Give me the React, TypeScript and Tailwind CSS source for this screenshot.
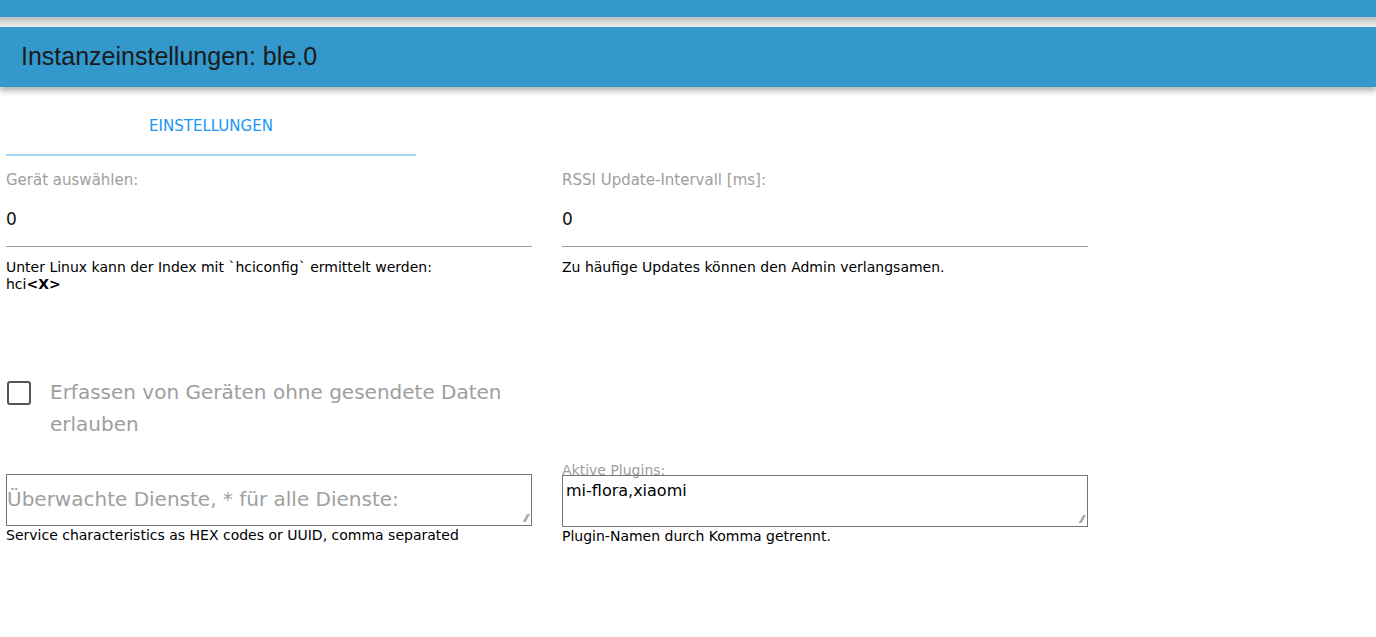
const App = () => {
  const font = { fontFamily: '"DejaVu Sans", "Open Sans", sans-serif' };
  return (
    <div className="min-h-screen bg-white" style={font}>
      <div className="h-[17px] bg-[#3399cc]" />
      <div className="h-[10px] bg-gradient-to-b from-[#bdbdbd] to-[#f5f5f5]" />
      <div className="h-[60px] bg-[#3399cc] flex items-center px-[21px] shadow-[0_4px_6px_rgba(0,0,0,0.3)]">
        <h1 className="text-[25px] text-[#1a1a1a]" style={{ fontFamily: '"Liberation Sans", Arial, sans-serif' }}>
          Instanzeinstellungen: ble.0
        </h1>
      </div>
      <div className="px-[6px]">
        <div className="w-[410px] h-[69px] flex items-center justify-center border-b-2 border-[#a6d6f5] text-[15px] text-[#2196f3] pt-3">
          EINSTELLUNGEN
        </div>
        <div className="grid grid-cols-[526px_526px] gap-x-[30px] mt-[14px]">
          <div>
            <div className="text-[15px] text-[#9e9e9e] leading-[20px]">Gerät auswählen:</div>
            <div className="h-[57px] border-b border-[#9e9e9e] flex items-center text-[17px] text-[#111] pt-1">0</div>
            <div className="text-[14px] text-black leading-[17px] mt-[12px]">
              Unter Linux kann der Index mit `hciconfig` ermittelt werden:<br />hci<b>&lt;X&gt;</b>
            </div>
          </div>
          <div>
            <div className="text-[15px] text-[#9e9e9e] leading-[20px]">RSSI Update-Intervall [ms]:</div>
            <div className="h-[57px] border-b border-[#9e9e9e] flex items-center text-[17px] text-[#111] pt-1">0</div>
            <div className="text-[14px] text-black leading-[17px] mt-[12px]">Zu häufige Updates können den Admin verlangsamen.</div>
          </div>
        </div>
        <div className="flex items-start gap-[19px] mt-[86px] ml-[1px]">
          <div className="w-[24px] h-[24px] border-2 border-[#555] rounded-[3px] mt-[2px]" />
          <div className="text-[20px] leading-[32px] text-[#9e9e9e] -mt-[3px]">
            Erfassen von Geräten ohne gesendete Daten<br />erlauben
          </div>
        </div>
        <div className="grid grid-cols-[526px_526px] gap-x-[30px] mt-[24px]">
          <div className="pt-[10px]">
            <div className="relative h-[52px] border border-[#767676] flex items-center text-[20px] text-[#a0a0a0] pb-[3px]">
              Überwachte Dienste, * für alle Dienste:
              <span className="absolute right-[3px] bottom-[1px] text-[10px] text-[#666] leading-none">⁄⁄</span>
            </div>
            <div className="text-[14px] text-black leading-[18px]">Service characteristics as HEX codes or UUID, comma separated</div>
          </div>
          <div>
            <div className="text-[14px] text-[#9e9e9e] leading-[10px] pt-[1px] -mb-px">Aktive Plugins:</div>
            <div className="relative h-[52px] border border-[#767676] text-[16px] text-black px-[3px] pt-[3px] mt-[1px]">
              mi-flora,xiaomi
              <span className="absolute right-[3px] bottom-[1px] text-[10px] text-[#666] leading-none">⁄⁄</span>
            </div>
            <div className="text-[14px] text-black leading-[18px]">Plugin-Namen durch Komma getrennt.</div>
          </div>
        </div>
      </div>
    </div>
  );
};

export default App;
